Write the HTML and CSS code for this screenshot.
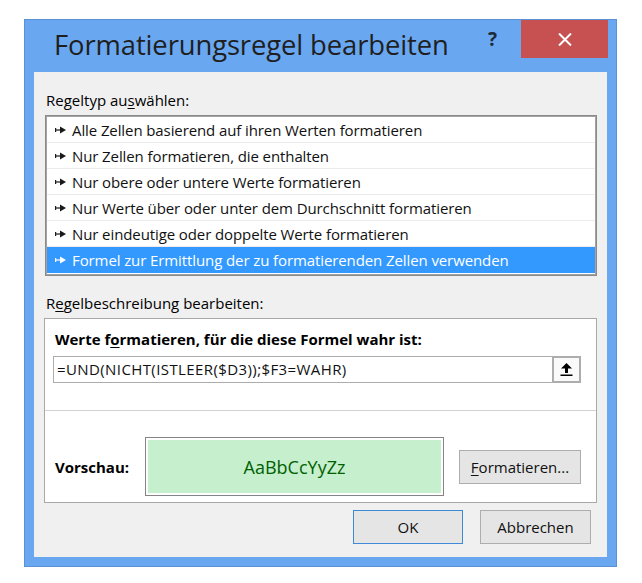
FILE: index.html
```html
<!DOCTYPE html>
<html>
<head>
<meta charset="utf-8">
<link rel="stylesheet" href="styles.css">
</head>
<body>
<div class="window">
  <div class="titlebar">
    <div class="title">Formatierungsregel bearbeiten</div>
    <div class="help">?</div>
    <div class="close"><svg width="14" height="13" viewBox="0 0 14 13"><path d="M1 0.5 L13 12.5 M13 0.5 L1 12.5" stroke="#fff" stroke-width="2" fill="none"/></svg></div>
  </div>
  <div class="client">
    <div class="label l1">Regeltyp au<u>s</u>wählen:</div>
    <div class="listbox">
      <div class="row"><svg class="pin" width="11" height="8" viewBox="0 0 11 8"><rect x="0" y="2" width="1.2" height="4"/><rect x="0" y="3.4" width="6" height="1.2"/><polygon points="5,0.5 11,4 5,7.5"/></svg>Alle Zellen basierend auf ihren Werten formatieren</div>
      <div class="row"><svg class="pin" width="11" height="8" viewBox="0 0 11 8"><rect x="0" y="2" width="1.2" height="4"/><rect x="0" y="3.4" width="6" height="1.2"/><polygon points="5,0.5 11,4 5,7.5"/></svg>Nur Zellen formatieren, die enthalten</div>
      <div class="row"><svg class="pin" width="11" height="8" viewBox="0 0 11 8"><rect x="0" y="2" width="1.2" height="4"/><rect x="0" y="3.4" width="6" height="1.2"/><polygon points="5,0.5 11,4 5,7.5"/></svg>Nur obere oder untere Werte formatieren</div>
      <div class="row"><svg class="pin" width="11" height="8" viewBox="0 0 11 8"><rect x="0" y="2" width="1.2" height="4"/><rect x="0" y="3.4" width="6" height="1.2"/><polygon points="5,0.5 11,4 5,7.5"/></svg>Nur Werte über oder unter dem Durchschnitt formatieren</div>
      <div class="row"><svg class="pin" width="11" height="8" viewBox="0 0 11 8"><rect x="0" y="2" width="1.2" height="4"/><rect x="0" y="3.4" width="6" height="1.2"/><polygon points="5,0.5 11,4 5,7.5"/></svg>Nur eindeutige oder doppelte Werte formatieren</div>
      <div class="row sel"><svg class="pin" width="11" height="8" viewBox="0 0 11 8"><rect x="0" y="2" width="1.2" height="4"/><rect x="0" y="3.4" width="6" height="1.2"/><polygon points="5,0.5 11,4 5,7.5"/></svg>Formel zur Ermittlung der zu formatierenden Zellen verwenden</div>
    </div>
    <div class="label l2">R<u>e</u>gelbeschreibung bearbeiten:</div>
    <div class="group">
      <div class="ghead">Werte f<u>o</u>rmatieren, für die diese Formel wahr ist:</div>
      <div class="formula">
        <div class="ftext">=UND(NICHT(ISTLEER($D3));$F3=WAHR)</div>
        <div class="fbtn"><svg width="13" height="13" viewBox="0 0 13 13"><polygon points="6.5,0 12,5.5 8,5.5 8,10 5,10 5,5.5 1,5.5" fill="#000"/><rect x="0.5" y="11.5" width="12" height="1.5" fill="#000"/></svg></div>
      </div>
      <div class="sep"></div>
      <div class="prow">
        <div class="plabel">Vorschau:</div>
        <div class="preview"><div class="pinner">AaBbCcYyZz</div></div>
        <div class="btn fmt"><u>F</u>ormatieren...</div>
      </div>
    </div>
    <div class="buttons">
      <div class="btn ok">OK</div>
      <div class="btn cancel">Abbrechen</div>
    </div>
  </div>
</div>
</body>
</html>
```

FILE: styles.css
```css
* { box-sizing: border-box; }
html, body { margin: 0; background: #fff; }
body {
  padding: 19px 0 0 24px;
  font-family: "Open Sans", "Noto Sans", sans-serif;
  font-size: 15px;
  color: #000;
}
u { text-decoration: underline; text-underline-offset: 2px; }

.window {
  width: 593px;
  height: 548px;
  background: #6aa7f1;
  border: 1px solid #5b91d6;
  padding: 0 9px 9px 9px;
  display: flex;
  flex-direction: column;
}
.titlebar {
  height: 52px;
  display: flex;
  align-items: flex-start;
  flex: none;
}
.title {
  margin-left: 20px;
  margin-top: 6px;
  font-size: 27.4px;
  line-height: 38px;
  color: #1f1f1f;
  letter-spacing: -0.1px;
}
.help {
  margin-left: auto;
  margin-top: 7px;
  margin-right: 24px;
  font-size: 19px;
  font-weight: 700;
  line-height: 24px;
  color: #1e2a38;
}
.close {
  width: 87px;
  height: 38px;
  margin-right: -1px;
  background: #c75050;
  display: flex;
  align-items: center;
  justify-content: center;
}

.client {
  flex: 1;
  background: #f0f0f0;
  padding: 0 10px 0 11px;
  display: flex;
  flex-direction: column;
}
.label {
  line-height: 20px;
  padding-left: 1px;
  color: #000;
}
.l1 { margin-top: 18px; }
.l2 { margin-top: 17px; }

.listbox {
  margin-top: 5px;
  height: 161px;
  background: #fff;
  border: 2px solid #a3a3a3;
  outline: 1px solid #8a8a8a;
  outline-offset: -1px;
}
.row {
  height: 26px;
  display: flex;
  align-items: center;
  padding-left: 8px;
  border-bottom: 1px solid #ececec;
  color: #111;
  white-space: nowrap;
  letter-spacing: -0.1px;
}
.pin { fill: #1a1a1a; margin-right: 6px; flex: none; }
.row.sel {
  background: #3399ff;
  color: #fff;
  border-bottom: none;
}
.row.sel .pin { fill: #fff; }

.group {
  margin-top: 5px;
  margin-left: -1px;
  height: 185px;
  background: #fff;
  border: 1px solid #a8a8a8;
  padding-top: 10px;
  display: flex;
  flex-direction: column;
}
.ghead {
  line-height: 20px;
  font-weight: 700;
  padding-left: 10px;
}
.formula {
  margin: 7px 15px 0 8px;
  height: 27px;
  display: flex;
}
.ftext {
  flex: 1;
  border: 1px solid #acacac;
  border-right: none;
  line-height: 25px;
  padding-left: 3px;
  white-space: nowrap;
  color: #111;
  letter-spacing: 0.4px;
}
.fbtn {
  width: 29px;
  height: 27px;
  border: 2px solid #adadad;
  background: #fafafa;
  display: flex;
  align-items: center;
  justify-content: center;
}
.sep {
  margin-top: 27px;
  height: 1px;
  background: #d2d2d2;
}
.prow {
  margin-top: 26px;
  display: flex;
  align-items: center;
}
.plabel {
  width: 100px;
  padding-left: 10px;
  font-weight: 700;
}
.preview {
  width: 299px;
  height: 59px;
  border: 1px solid #858585;
  padding: 2px;
  background: #fff;
}
.pinner {
  height: 100%;
  background: #c6efce;
  color: #006100;
  font-size: 18px;
  display: flex;
  align-items: center;
  justify-content: center;
}
.btn {
  height: 34px;
  border: 1px solid #adadad;
  background: #e5e5e5;
  display: flex;
  align-items: center;
  justify-content: center;
  color: #111;
}
.fmt {
  margin-left: 15px;
  width: 122px;
}
.buttons {
  margin-top: 7px;
  display: flex;
  justify-content: flex-end;
  gap: 17px;
  padding-right: 6px;
}
.ok {
  width: 110px;
  border-color: #3c8ad8;
}
.cancel { width: 111px; }
```
